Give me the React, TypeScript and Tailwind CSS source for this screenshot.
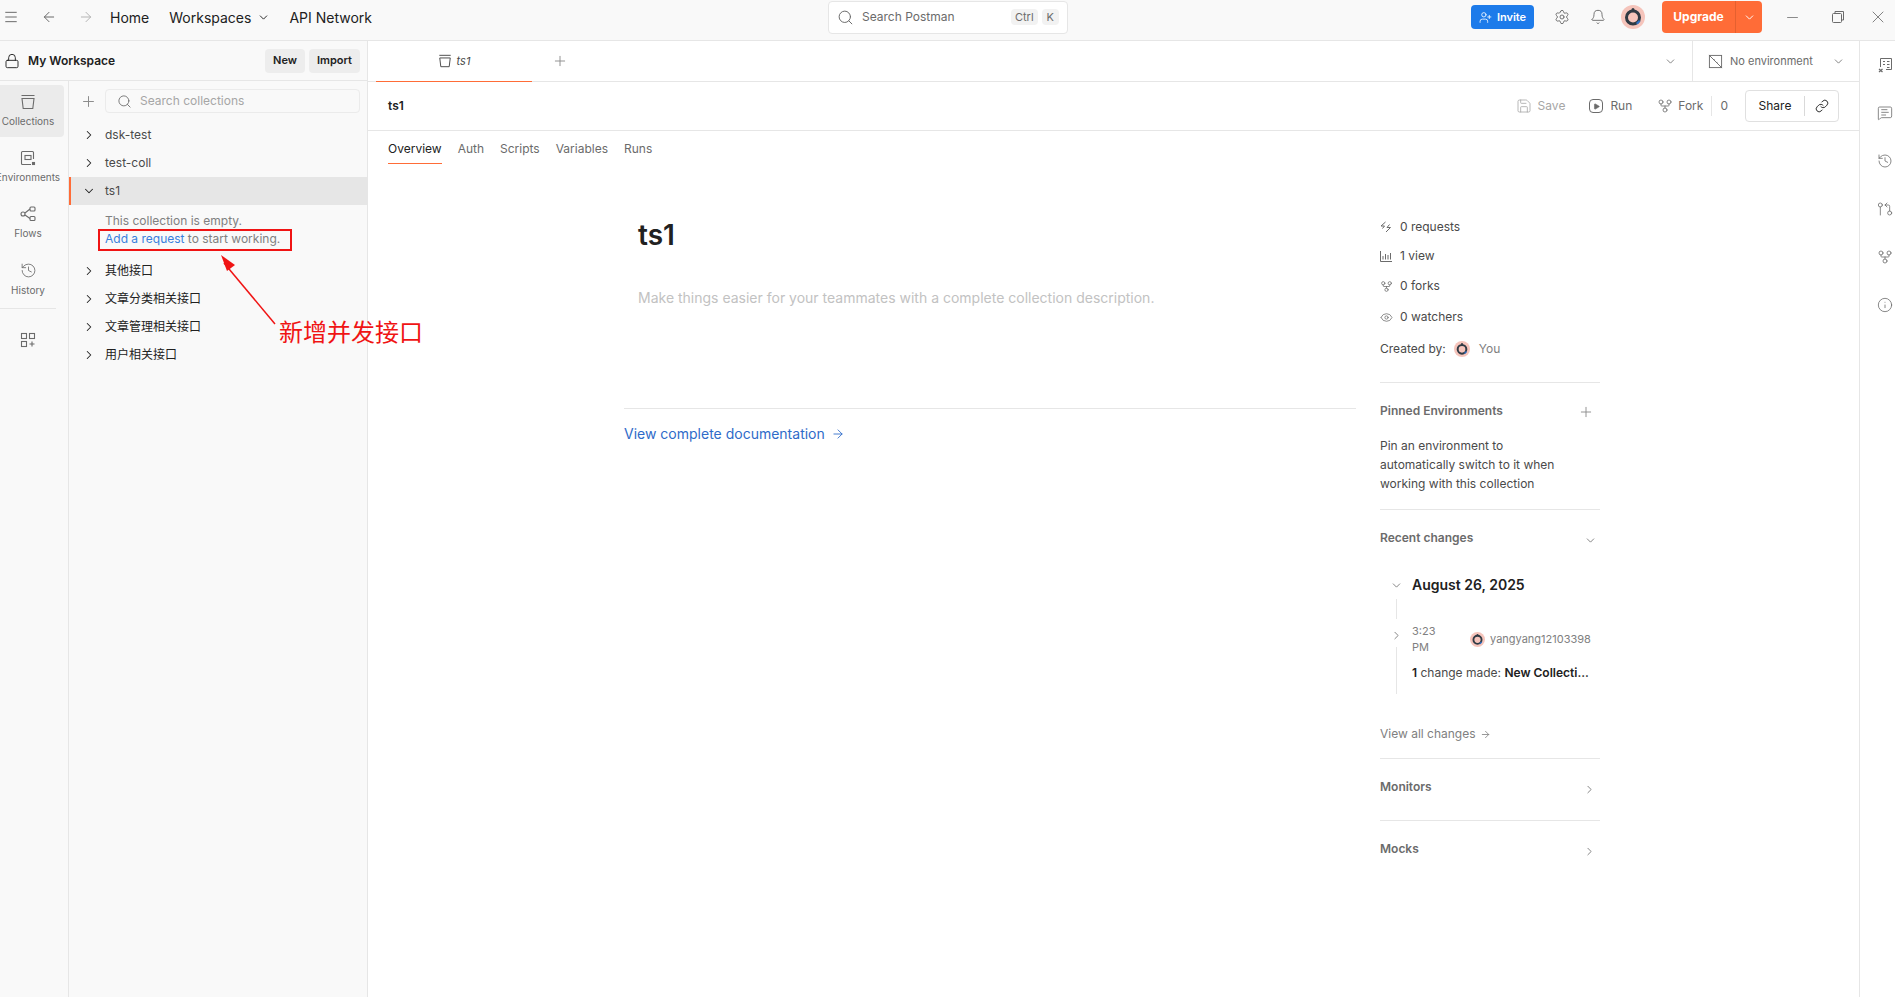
import {
  ArrowLeft,
  ArrowRight,
  Bell,
  ChevronDown,
  ChevronRight,
  Eye,
  GitFork,
  GitPullRequestArrow,
  History,
  Info,
  Link as LinkIcon,
  Lock,
  Menu,
  MessageSquareText,
  Minus,
  Play,
  Plus,
  Save,
  Search,
  Settings,
  UserPlus,
  X,
} from 'lucide-react';

const Bucket = ({ className = '' }: { className?: string }) => (
  <svg className={className} viewBox="0 0 16 16" fill="none" stroke="currentColor" strokeWidth="1.1">
    <path d="M1.5 1.5h13M2 4.5h12l-1.2 10H3.2z" />
  </svg>
);

const EnvIcon = () => (
  <svg className="h-4 w-4" viewBox="0 0 16 16" fill="none" stroke="currentColor" strokeWidth="1.1">
    <path d="M13.5 9V2.5a1 1 0 0 0-1-1h-10a1 1 0 0 0-1 1v11a1 1 0 0 0 1 1H11" />
    <rect x="5" y="5.5" width="6" height="4" />
    <rect x="12.5" y="12.5" width="2" height="2" fill="currentColor" />
  </svg>
);

const FlowsIcon = () => (
  <svg className="h-4 w-4" viewBox="0 0 16 16" fill="none" stroke="currentColor" strokeWidth="1.1">
    <circle cx="3" cy="8" r="2" />
    <rect x="10" y="1" width="5" height="4" rx="1" />
    <rect x="10" y="10.5" width="5" height="4" rx="1" />
    <path d="M5 7l5-4M5 9l5 3.5" />
  </svg>
);

const GridPlus = () => (
  <svg className="h-4 w-4" viewBox="0 0 16 16" fill="none" stroke="currentColor" strokeWidth="1.1">
    <rect x="1.5" y="1.5" width="5" height="5" />
    <rect x="9.5" y="1.5" width="5" height="5" />
    <rect x="1.5" y="9.5" width="5" height="5" />
    <path d="M12 9.5v5M9.5 12h5" />
  </svg>
);

const Avatar = ({ size }: { size: number }) => (
  <svg width={size} height={size} viewBox="0 0 24 24" className="shrink-0">
    <circle cx="12" cy="12" r="12" fill="#f5c4bb" />
    <circle cx="12" cy="12.5" r="6.5" fill="none" stroke="#2f3a44" strokeWidth="3" />
    <circle cx="12" cy="4.5" r="1.5" fill="#2f3a44" />
    <path d="M15 18l3-3 1.5 1.5-3 3z" fill="#2d6fc4" />
  </svg>
);

const VarsIcon = () => (
  <svg className="h-4 w-4" viewBox="0 0 16 16" fill="none" stroke="currentColor" strokeWidth="1">
    <path d="M3.5 10V1.5h11v11H9" />
    <path d="M6 4.5h2M10 4.5h2.5M6 7.5h2M10 7.5h2.5M10 10.5h2.5" />
    <path d="M2 12l3.5 3M5.5 12L2 15" strokeWidth="1.3" />
  </svg>
);

const NoEnvIcon = () => (
  <svg className="h-[15px] w-[15px]" viewBox="0 0 16 16" fill="none" stroke="currentColor" strokeWidth="1">
    <rect x="1.5" y="1.5" width="13" height="13" />
    <path d="M1 1l14 14" />
    <path d="M6 6h1M9 9h1" />
  </svg>
);

const RequestsIcon = () => (
  <svg className="h-[12px] w-[12px]" viewBox="0 0 12 12" fill="none" stroke="currentColor">
    <path d="M1 5L5.5 1M9.5 3.5L7 6.5h3.5L6 11M1 5h3.5L2.5 7.5" />
  </svg>
);

const collections = ['dsk-test', 'test-coll'];
const moreCollections = ['其他接口', '文章分类相关接口', '文章管理相关接口', '用户相关接口'];
const tabs = ['Auth', 'Scripts', 'Variables', 'Runs'];

const TopBar = () => (
  <header className="flex h-[41px] shrink-0 items-center border-b border-[#e6e6e6] bg-[#f9f9f9] pb-[6px] text-[#212121]">
    <div className="flex w-[828px] items-center">
      <Menu className="ml-[3px] h-[16px] w-[16px] text-[#6b6b6b]" strokeWidth={1.5} />
      <ArrowLeft className="ml-[22px] h-[16px] w-[16px] text-[#6b6b6b]" strokeWidth={1.5} />
      <ArrowRight className="ml-[21px] h-[16px] w-[16px] text-[#b5b5b5]" strokeWidth={1.5} />
      <span className="ml-[16px] text-[14px] text-[#212121]">Home</span>
      <span className="ml-[20px] text-[14px]">Workspaces</span>
      <ChevronDown className="ml-[6px] h-[13px] w-[13px]" strokeWidth={1.75} />
      <span className="ml-[19px] text-[14px]">API Network</span>
    </div>
    <div className="flex h-[33px] w-[240px] items-center rounded border border-[#e6e6e6] bg-white pl-[8px] pr-[8px]">
      <Search className="h-[17px] w-[17px] text-[#6b6b6b]" strokeWidth={1.4} />
      <span className="ml-[8px] text-[12px] text-[#6b6b6b]">Search Postman</span>
      <span className="ml-auto rounded bg-[#f2f2f2] px-[4px] text-[11px] leading-[16px] text-[#6b6b6b]">Ctrl</span>
      <span className="ml-[4px] rounded bg-[#f2f2f2] px-[5px] text-[11px] leading-[16px] text-[#6b6b6b]">K</span>
    </div>
    <div className="flex flex-1 items-center">
      <button className="ml-[403px] flex h-[24px] w-[63px] items-center justify-center gap-[5px] rounded bg-[#1d7bea] text-[11px] font-semibold text-white">
        <UserPlus className="h-[13px] w-[13px]" strokeWidth={1.5} />
        Invite
      </button>
      <Settings className="ml-[20px] h-[16px] w-[16px] text-[#6b6b6b]" strokeWidth={1.4} />
      <Bell className="ml-[20px] h-[16px] w-[16px] text-[#6b6b6b]" strokeWidth={1.4} />
      <div className="ml-[15px]">
        <Avatar size={24} />
      </div>
      <div className="ml-[17px] flex h-[32px] w-[100px] items-center rounded bg-[#ff6c37] text-white">
        <span className="w-[73px] text-center text-[12px] font-bold">Upgrade</span>
        <span className="flex h-full flex-1 items-center justify-center border-l border-[#e5602f]">
          <ChevronDown className="h-[13px] w-[13px]" strokeWidth={1.75} />
        </span>
      </div>
      <Minus className="ml-[22px] h-[17px] w-[17px] text-[#6b6b6b]" strokeWidth={1.1} />
      <svg className="ml-[30px] h-[14px] w-[14px] text-[#6b6b6b]" viewBox="0 0 14 14" fill="none" stroke="currentColor">
        <rect x="1.5" y="3.5" width="9" height="9" rx="1" />
        <path d="M4 3.5v-2h8.5v8.5h-2" />
      </svg>
      <X className="ml-[23px] h-[20px] w-[20px] text-[#6b6b6b]" strokeWidth={1} />
    </div>
  </header>
);

const RailItem = ({ label, icon, active }: { label: string; icon: React.ReactNode; active?: boolean }) => (
  <div className={`mb-[4px] h-[52px] w-[64px] rounded-r pr-[8px] ${active ? 'bg-[#ebebeb]' : ''} text-[#6b6b6b]`}>
    <div className="flex h-full w-[56px] flex-col items-center justify-center">
      {icon}
      <span className="mt-[4px] whitespace-nowrap text-[10px] leading-[14px]">{label}</span>
    </div>
  </div>
);

const Row = ({ name, open, cjk }: { name: string; open?: boolean; cjk?: boolean }) => (
  <div className={`flex h-[28px] items-center ${open ? 'border-l-2 border-[#ff6c37] bg-[#e6e6e6] pl-[11px]' : 'pl-[13px]'}`}>
    {open ? (
      <ChevronDown className="h-[14px] w-[14px] text-[#212121]" strokeWidth={1.75} />
    ) : (
      <ChevronRight className="h-[14px] w-[14px] text-[#212121]" strokeWidth={1.75} />
    )}
    <span className={`ml-[9px] text-[12px] ${cjk ? 'text-[#212121]' : 'text-[#4a4a4a]'}`}>{name}</span>
  </div>
);

const Sidebar = () => (
  <aside className="flex w-[368px] shrink-0 flex-col border-r border-[#e6e6e6] bg-[#f9f9f9]">
    <div className="flex h-[40px] shrink-0 items-center border-b border-[#e6e6e6] pl-[4px] pr-[7px]">
      <Lock className="h-[16px] w-[16px] text-[#212121]" strokeWidth={1.4} />
      <span className="ml-[8px] text-[12px] font-semibold text-[#212121]">My Workspace</span>
      <button className="ml-auto h-[24px] rounded bg-[#ededed] px-[8px] text-[11px] font-semibold text-[#212121]">New</button>
      <button className="ml-[4px] h-[24px] rounded bg-[#ededed] px-[8px] text-[11px] font-semibold text-[#212121]">Import</button>
    </div>
    <div className="flex flex-1">
      <nav className="w-[69px] shrink-0 border-r border-[#e6e6e6] pt-[4px]">
        <RailItem active label="Collections" icon={<Bucket className="h-4 w-4" />} />
        <RailItem label="Environments" icon={<EnvIcon />} />
        <RailItem label="Flows" icon={<FlowsIcon />} />
        <RailItem label="History" icon={<History className="h-[17px] w-[17px]" strokeWidth={1.2} />} />
        <div className="mt-[-1px] h-px w-[56px] bg-[#e6e6e6]" />
        <div className="flex w-[56px] justify-center pt-[23px] text-[#6b6b6b]">
          <GridPlus />
        </div>
      </nav>
      <div className="relative flex-1 pt-[8px]">
        <div className="flex h-[24px] items-center pl-[11px] pr-[7px]">
          <Plus className="h-[17px] w-[17px] text-[#8c8c8c]" strokeWidth={1.4} />
          <div className="ml-[8px] flex h-full flex-1 items-center rounded-sm border border-[#ebebeb] pl-[11px]">
            <Search className="h-[15px] w-[15px] text-[#6b6b6b]" strokeWidth={1.4} />
            <span className="ml-[8px] text-[12px] text-[#a6a6a6]">Search collections</span>
          </div>
        </div>
        <div className="mt-[8px]">
          {collections.map((name) => (
            <Row key={name} name={name} />
          ))}
          <Row name="ts1" open />
          <div className="pb-[9px] pl-[36px] pt-[7px] text-[12px] leading-[18px] text-[#808080]">
            <p>This collection is empty.</p>
            <p>
              <span className="text-[#3a7fdc]">Add a request</span> to start working.
            </p>
          </div>
          {moreCollections.map((name) => (
            <Row key={name} name={name} cjk />
          ))}
        </div>
      </div>
    </div>
  </aside>
);

const Stat = ({ icon, label, className = '' }: { icon: React.ReactNode; label: string; className?: string }) => (
  <div className={`flex h-[30px] items-center text-[12px] text-[#4a4a4a] ${className}`}>
    <span className="flex w-[20px] text-[#6b6b6b]">{icon}</span>
    {label}
  </div>
);

const Details = () => (
  <div className="w-[220px] shrink-0 pt-[130px] text-[12px] text-[#4a4a4a]">
    <Stat icon={<RequestsIcon />} label="0 requests" />
    <Stat
      className="-mt-px"
      icon={
        <svg className="h-[12px] w-[12px]" viewBox="0 0 12 12" fill="none" stroke="currentColor">
          <path d="M.5 1v10.5H12M3 6v3.5M5.5 4v5.5M8 5v4.5M10.5 3v6.5" />
        </svg>
      }
      label="1 view"
    />
    <Stat icon={<GitFork className="h-[13px] w-[13px]" strokeWidth={1.4} />} label="0 forks" />
    <Stat className="mt-px" icon={<Eye className="h-[13px] w-[13px]" strokeWidth={1.4} />} label="0 watchers" />
    <div className="mt-[2px] flex h-[30px] items-center">
      Created by:
      <span className="ml-[8px]">
        <Avatar size={16} />
      </span>
      <span className="ml-[9px] text-[#808080]">You</span>
    </div>
    <div className="mt-[18px] h-px bg-[#e6e6e6]" />
    <div className="flex items-start justify-between pr-[6px] pt-[19px]">
      <span className="font-semibold text-[#6b6b6b]">Pinned Environments</span>
      <Plus className="mt-[2px] h-[16px] w-[16px] text-[#8c8c8c]" strokeWidth={1.4} />
    </div>
    <p className="mt-[16px] leading-[19px]">
      Pin an environment to
      <br />
      automatically switch to it when
      <br />
      working with this collection
    </p>
    <div className="mt-[16px] h-px bg-[#e6e6e6]" />
    <div className="flex items-center justify-between pr-[3px] pt-[19px]">
      <span className="font-semibold text-[#6b6b6b]">Recent changes</span>
      <ChevronDown className="mt-[4px] h-[13px] w-[13px] text-[#6b6b6b]" strokeWidth={1.5} />
    </div>
    <div className="relative mt-[27px] pl-[32px]">
      <ChevronDown className="absolute left-[10px] top-[5px] h-[13px] w-[13px] text-[#6b6b6b]" strokeWidth={1.5} />
      <p className="text-[14px] font-semibold leading-[22px] text-[#212121]">August 26, 2025</p>
      <div className="absolute left-[16px] top-[25px] h-[20px] w-px bg-[#e6e6e6]" />
      <div className="mt-[27px] flex items-center">
        <span className="w-[58px] text-[11px] leading-[16px] text-[#808080]">
          3:23
          <br />
          PM
        </span>
        <Avatar size={15} />
        <span className="ml-[5px] text-[11px] text-[#808080]">yangyang12103398</span>
      </div>
      <ChevronRight className="absolute left-[10px] top-[55px] h-[13px] w-[13px] text-[#6b6b6b]" strokeWidth={1.5} />
      <div className="absolute left-[16px] top-[73px] h-[47px] w-px bg-[#e6e6e6]" />
      <p className="mt-[9px] whitespace-nowrap text-[12px] leading-[18px]">
        <span className="font-semibold text-[#212121]">1</span> change made:{' '}
        <span className="font-semibold text-[#212121]">New Collecti...</span>
      </p>
    </div>
    <div className="mt-[43px] flex items-center gap-[4px] text-[#808080]">
      View all changes
      <ArrowRight className="h-[11px] w-[11px]" strokeWidth={1.75} />
    </div>
    <div className="mt-[15px] h-px bg-[#e6e6e6]" />
    <div className="flex h-[61px] justify-between pr-[4px] pt-[19px]">
      <span className="font-semibold text-[#6b6b6b]">Monitors</span>
      <ChevronRight className="mt-[5px] h-[13px] w-[13px] text-[#6b6b6b]" strokeWidth={1.5} />
    </div>
    <div className="h-px bg-[#e6e6e6]" />
    <div className="flex justify-between pr-[4px] pt-[19px]">
      <span className="font-semibold text-[#6b6b6b]">Mocks</span>
      <ChevronRight className="mt-[5px] h-[13px] w-[13px] text-[#6b6b6b]" strokeWidth={1.5} />
    </div>
  </div>
);

const Main = () => (
  <main className="flex flex-1 flex-col bg-white">
    <div className="flex h-[41px] shrink-0 border-b border-[#e6e6e6]">
      <div className="ml-[8px] flex h-[41px] w-[156px] items-center justify-center gap-[5px] border-b border-[#ff6c37] text-[#4a4a4a]">
        <Bucket className="h-[14px] w-[14px]" />
        <span className="text-[11px] italic">ts1</span>
      </div>
      <div className="flex items-center pl-[20px]">
        <Plus className="h-[16px] w-[16px] text-[#8c8c8c]" strokeWidth={1.4} />
      </div>
      <div className="ml-auto flex items-center">
        <ChevronDown className="mr-[15px] h-[13px] w-[13px] text-[#6b6b6b]" strokeWidth={1.5} />
        <div className="flex h-full w-[167px] items-center border-l border-[#e6e6e6] pl-[15px] text-[#6b6b6b]">
          <NoEnvIcon />
          <span className="ml-[7px] text-[11px]">No environment</span>
          <ChevronDown className="ml-auto mr-[14px] h-[13px] w-[13px]" strokeWidth={1.5} />
        </div>
      </div>
    </div>
    <div className="flex h-[49px] shrink-0 items-center border-b border-[#e6e6e6] pl-[20px] pr-[20px]">
      <span className="text-[12px] font-semibold text-[#212121]">ts1</span>
      <div className="ml-auto flex items-center text-[12px] text-[#6b6b6b]">
        <Save className="h-[16px] w-[16px] text-[#a6a6a6]" strokeWidth={1.2} />
        <span className="ml-[6px] text-[#a6a6a6]">Save</span>
        <span className="ml-[24px] flex h-[14px] w-[14px] items-center justify-center rounded-sm border border-[#6b6b6b]">
          <Play className="h-[7px] w-[7px] fill-current" />
        </span>
        <span className="ml-[7px]">Run</span>
        <GitFork className="ml-[25px] h-[16px] w-[16px]" strokeWidth={1.2} />
        <span className="ml-[5px]">Fork</span>
        <span className="ml-[8px] h-[20px] w-px bg-[#e6e6e6]" />
        <span className="ml-[8px]">0</span>
        <div className="ml-[17px] flex h-[32px] w-[94px] items-center rounded border border-[#e0e0e0] text-[#212121]">
          <span className="w-[58px] text-center">Share</span>
          <span className="h-[20px] w-px bg-[#d9d9d9]" />
          <span className="flex flex-1 justify-center">
            <LinkIcon className="h-[14px] w-[14px]" strokeWidth={1.6} />
          </span>
        </div>
      </div>
    </div>
    <div className="flex h-[35px] shrink-0 items-center gap-[16px] pl-[20px] text-[12px] text-[#6b6b6b]">
      <span className="relative text-[#212121]">
        Overview
        <span className="absolute inset-x-0 top-[23px] h-px bg-[#ff6c37]" />
      </span>
      {tabs.map((tab) => (
        <span key={tab}>{tab}</span>
      ))}
    </div>
    <div className="flex flex-1 pl-[256px]">
      <div className="w-[732px] shrink-0">
        <div className="h-[243px] border-b border-[#e6e6e6] pl-[14px] pt-[51px]">
          <h1 className="text-[28px] font-semibold leading-[36px] text-[#212121]">ts1</h1>
          <p className="mt-[35px] text-[14px] leading-[20px] text-[#c2c2c2]">
            Make things easier for your teammates with a complete collection description.
          </p>
        </div>
        <div className="mt-[14px] flex items-center gap-[6px] text-[14px] text-[#2f6bc9]">
          View complete documentation
          <ArrowRight className="h-[14px] w-[14px]" strokeWidth={1.5} />
        </div>
      </div>
      <div className="ml-[24px] -mt-[84px]">
        <Details />
      </div>
    </div>
  </main>
);

const RightRail = () => (
  <aside className="flex w-[36px] shrink-0 flex-col items-center gap-[32px] border-l border-[#e6e6e6] bg-white pl-[14px] pt-[16px] text-[#6b6b6b]">
    <VarsIcon />
    <MessageSquareText className="h-4 w-4" strokeWidth={1.2} />
    <History className="h-4 w-4" strokeWidth={1.2} />
    <GitPullRequestArrow className="h-4 w-4" strokeWidth={1.2} />
    <GitFork className="h-4 w-4" strokeWidth={1.2} />
    <Info className="h-4 w-4" strokeWidth={1.2} />
  </aside>
);

// red markup drawn on top of the screenshot
const Annotation = () => (
  <div className="pointer-events-none absolute inset-0">
    <div className="absolute left-[98px] top-[229px] h-[22px] w-[194px] border-2 border-[#f01414]" />
    <svg className="absolute left-[213px] top-[248px]" width="70" height="80" viewBox="0 0 70 80" fill="none">
      <path d="M62 76L11 15" stroke="#f01414" strokeWidth="1.5" />
      <path d="M8 7l14 10-8 6z" fill="#f01414" />
    </svg>
    <span className="absolute left-[279px] top-[315px] text-[24px] leading-[36px] text-[#f01414]">新增并发接口</span>
  </div>
);

export default function App() {
  return (
    <div
      className="relative flex h-[997px] w-[1895px] flex-col overflow-hidden bg-white"
      style={{ fontFamily: 'Inter, "Noto Sans CJK SC", sans-serif' }}
    >
      <TopBar />
      <div className="flex flex-1">
        <Sidebar />
        <Main />
        <RightRail />
      </div>
      <Annotation />
    </div>
  );
}
